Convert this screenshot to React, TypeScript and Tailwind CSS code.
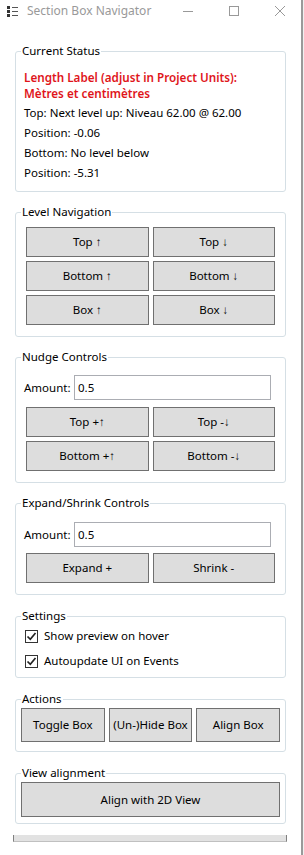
import React from "react";

const font = { fontFamily: '"Noto Sans", "Open Sans", Arial, sans-serif' };

function Group({
  title,
  className,
  children,
}: {
  title: string;
  className: string;
  children: React.ReactNode;
}) {
  return (
    <div
      className={`relative ml-[15px] w-[271px] rounded-[3px] border border-[#d5dfe5] ${className}`}
    >
      <span className="absolute left-[5px] -top-[9px] bg-white px-[1px] text-[11.5px] leading-[16px] text-black">
        {title}
      </span>
      {children}
    </div>
  );
}

function Btn({ label, h = "h-[30px]" }: { label: string; h?: string }) {
  return (
    <button
      className={`${h} w-full border border-[#707070] bg-[#dddddd] text-[11.5px] leading-[16px] text-black`}
    >
      {label}
    </button>
  );
}

function Check({ label }: { label: string }) {
  return (
    <div className="flex h-[20px] items-center pl-[9px]">
      <div className="flex h-[13px] w-[13px] items-center justify-center border border-[#333333] bg-white">
        <svg width="11" height="11" viewBox="0 0 11 11">
          <path d="M1.5 5.5 L4.3 8.3 L9.5 2" fill="none" stroke="#222" strokeWidth="1.7" />
        </svg>
      </div>
      <span className="ml-[6px] text-[11.5px] leading-[16px] text-black">{label}</span>
    </div>
  );
}

export default function App() {
  return (
    <div className="relative flex h-[855px] w-[304px] bg-white" style={font}>
      <div className="w-[301px]">
        {/* Title bar */}
        <div className="flex h-[22px] items-center">
          <svg className="ml-[7px]" width="11" height="11" viewBox="0 0 11 11">
            <rect x="0" y="0" width="3" height="3" fill="#333" />
            <rect x="0" y="4" width="3" height="3" fill="#333" />
            <rect x="0" y="8" width="3" height="3" fill="#333" />
            <rect x="5" y="1" width="6" height="1" fill="#555" />
            <rect x="5" y="5" width="6" height="1" fill="#555" />
            <rect x="5" y="9" width="6" height="1" fill="#555" />
          </svg>
          <span className="ml-[9px] text-[12px] leading-[16px] text-[#999999]">
            Section Box Navigator
          </span>
          <div className="ml-auto flex items-center">
            <svg className="mr-[36px]" width="10" height="10" viewBox="0 0 10 10">
              <path d="M0 5.5 H10" stroke="#999" strokeWidth="1" />
            </svg>
            <svg className="mr-[36px]" width="10" height="10" viewBox="0 0 10 10">
              <rect x="0.5" y="0.5" width="9" height="9" fill="none" stroke="#999" strokeWidth="1" />
            </svg>
            <svg className="mr-[16px]" width="10" height="10" viewBox="0 0 10 10">
              <path d="M0 0 L10 10 M10 0 L0 10" stroke="#999" strokeWidth="1" />
            </svg>
          </div>
        </div>

        <div className="pt-[29px]">
          <Group title="Current Status" className="pt-[17px] pb-[8px] pl-[8px]">
            <div className="text-[11.7px] font-semibold leading-[16px] text-[#e0151b]">
              <div>Length Label (adjust in Project Units):</div>
              <div>Mètres et centimètres</div>
            </div>
            <div className="mt-[2px] text-[11.5px] leading-[20px] text-black">
              <div>Top: Next level up: Niveau 62.00 @ 62.00</div>
              <div>Position: -0.06</div>
              <div>Bottom: No level below</div>
              <div>Position: -5.31</div>
            </div>
          </Group>

          <Group title="Level Navigation" className="mt-[20px] px-[10px] pt-[14px] pb-[11px]">
            <div className="grid grid-cols-2 gap-[4px]">
              <Btn label="Top ↑" />
              <Btn label="Top ↓" />
              <Btn label="Bottom ↑" />
              <Btn label="Bottom ↓" />
              <Btn label="Box ↑" />
              <Btn label="Box ↓" />
            </div>
          </Group>

          <Group title="Nudge Controls" className="mt-[20px] pt-[17px] pb-[11px]">
            <div className="flex items-center pl-[8px]">
              <span className="w-[50px] text-[11.5px] leading-[16px] text-black">Amount:</span>
              <div className="flex h-[25px] w-[197px] items-center border border-[#abadb3] pl-[3px] text-[11.5px] text-black">
                0.5
              </div>
            </div>
            <div className="mt-[7px] grid grid-cols-2 gap-[4px] px-[10px]">
              <Btn label="Top +↑" />
              <Btn label="Top -↓" />
              <Btn label="Bottom +↑" />
              <Btn label="Bottom -↓" />
            </div>
          </Group>

          <Group title="Expand/Shrink Controls" className="mt-[20px] pt-[18px] pb-[11px]">
            <div className="flex items-center pl-[8px]">
              <span className="w-[50px] text-[11.5px] leading-[16px] text-black">Amount:</span>
              <div className="flex h-[25px] w-[197px] items-center border border-[#abadb3] pl-[3px] text-[11.5px] text-black">
                0.5
              </div>
            </div>
            <div className="mt-[6px] grid grid-cols-2 gap-[4px] px-[10px]">
              <Btn label="Expand +" />
              <Btn label="Shrink -" />
            </div>
          </Group>

          <Group title="Settings" className="mt-[21px] pt-[9px] pb-[6px]">
            <div className="flex flex-col gap-[5px]">
              <Check label="Show preview on hover" />
              <Check label="Autoupdate UI on Events" />
            </div>
          </Group>

          <Group title="Actions" className="mt-[21px] px-[5px] pt-[8px] pb-[9px]">
            <div className="grid grid-cols-3 gap-[4px]">
              <Btn label="Toggle Box" h="h-[34px]" />
              <Btn label="(Un-)Hide Box" h="h-[34px]" />
              <Btn label="Align Box" h="h-[34px]" />
            </div>
          </Group>

          <Group title="View alignment" className="mt-[21px] px-[5px] pt-[8px] pb-[6px]">
            <Btn label="Align with 2D View" h="h-[35px]" />
          </Group>

          <div className="ml-[13px] mt-[11px] h-[7px] w-[274px] border-x border-b border-x-[#808080] border-b-[#c0c0c0] bg-[#e2e2e2]" />
        </div>
      </div>
      <div className="w-[2px] bg-[#9a9a9a]" />
      <div className="w-[1px] bg-[#f0f0f0]" />
    </div>
  );
}
